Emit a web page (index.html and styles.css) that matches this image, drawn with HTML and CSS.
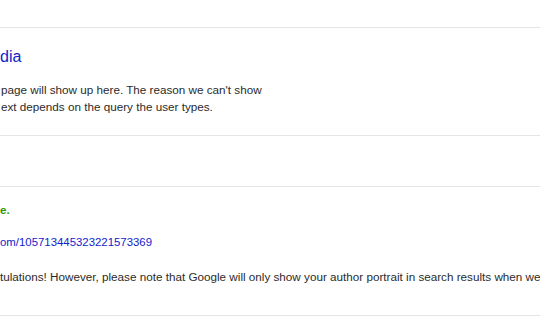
FILE: index.html
```html
<!DOCTYPE html>
<html>
<head>
<meta charset="utf-8">
<link rel="stylesheet" href="styles.css">
</head>
<body>
<div class="page">
  <div class="top"></div>
  <section class="result">
    <a class="title" href="#">dia</a>
    <p class="snippet">page will show up here. The reason we can't show<br>ext depends on the query the user types.</p>
  </section>
  <section class="empty"></section>
  <section class="status">
    <p class="ok">e.</p>
    <a class="url" href="#">om/105713445323221573369</a>
    <p class="note">tulations! However, please note that Google will only show your author portrait in search results when we</p>
  </section>
</div>
</body>
</html>
```

FILE: styles.css
```css
html, body {
  margin: 0;
  padding: 0;
  background: #fff;
}
.page {
  width: 540px;
  height: 334px;
  overflow: hidden;
  font-family: Arial, "Liberation Sans", sans-serif;
  font-size: 11.7px;
  color: #2b2b2b;
}
.top {
  height: 27px;
  border-bottom: 1px solid #e5e5e5;
}
.result {
  padding-top: 19px;
  height: 88px;
  border-bottom: 1px solid #e5e5e5;
}
.title {
  display: block;
  font-size: 16px;
  line-height: 20px;
  color: #1122cc;
  text-decoration: none;
}
.snippet {
  margin: 14px 0 0 1px;
  line-height: 17px;
  white-space: nowrap;
}
.empty {
  height: 50px;
  border-bottom: 1px solid #e5e5e5;
}
.status {
  padding-top: 14px;
  height: 114px;
  border-bottom: 1px solid #e5e5e5;
}
.ok {
  margin: 0;
  line-height: 17px;
  font-weight: bold;
  color: #339900;
}
.url {
  display: block;
  margin-top: 16px;
  line-height: 17px;
  font-size: 11.4px;
  color: #1122cc;
  text-decoration: none;
}
.note {
  margin: 17px 0 0 0;
  line-height: 17px;
  white-space: nowrap;
}
```
